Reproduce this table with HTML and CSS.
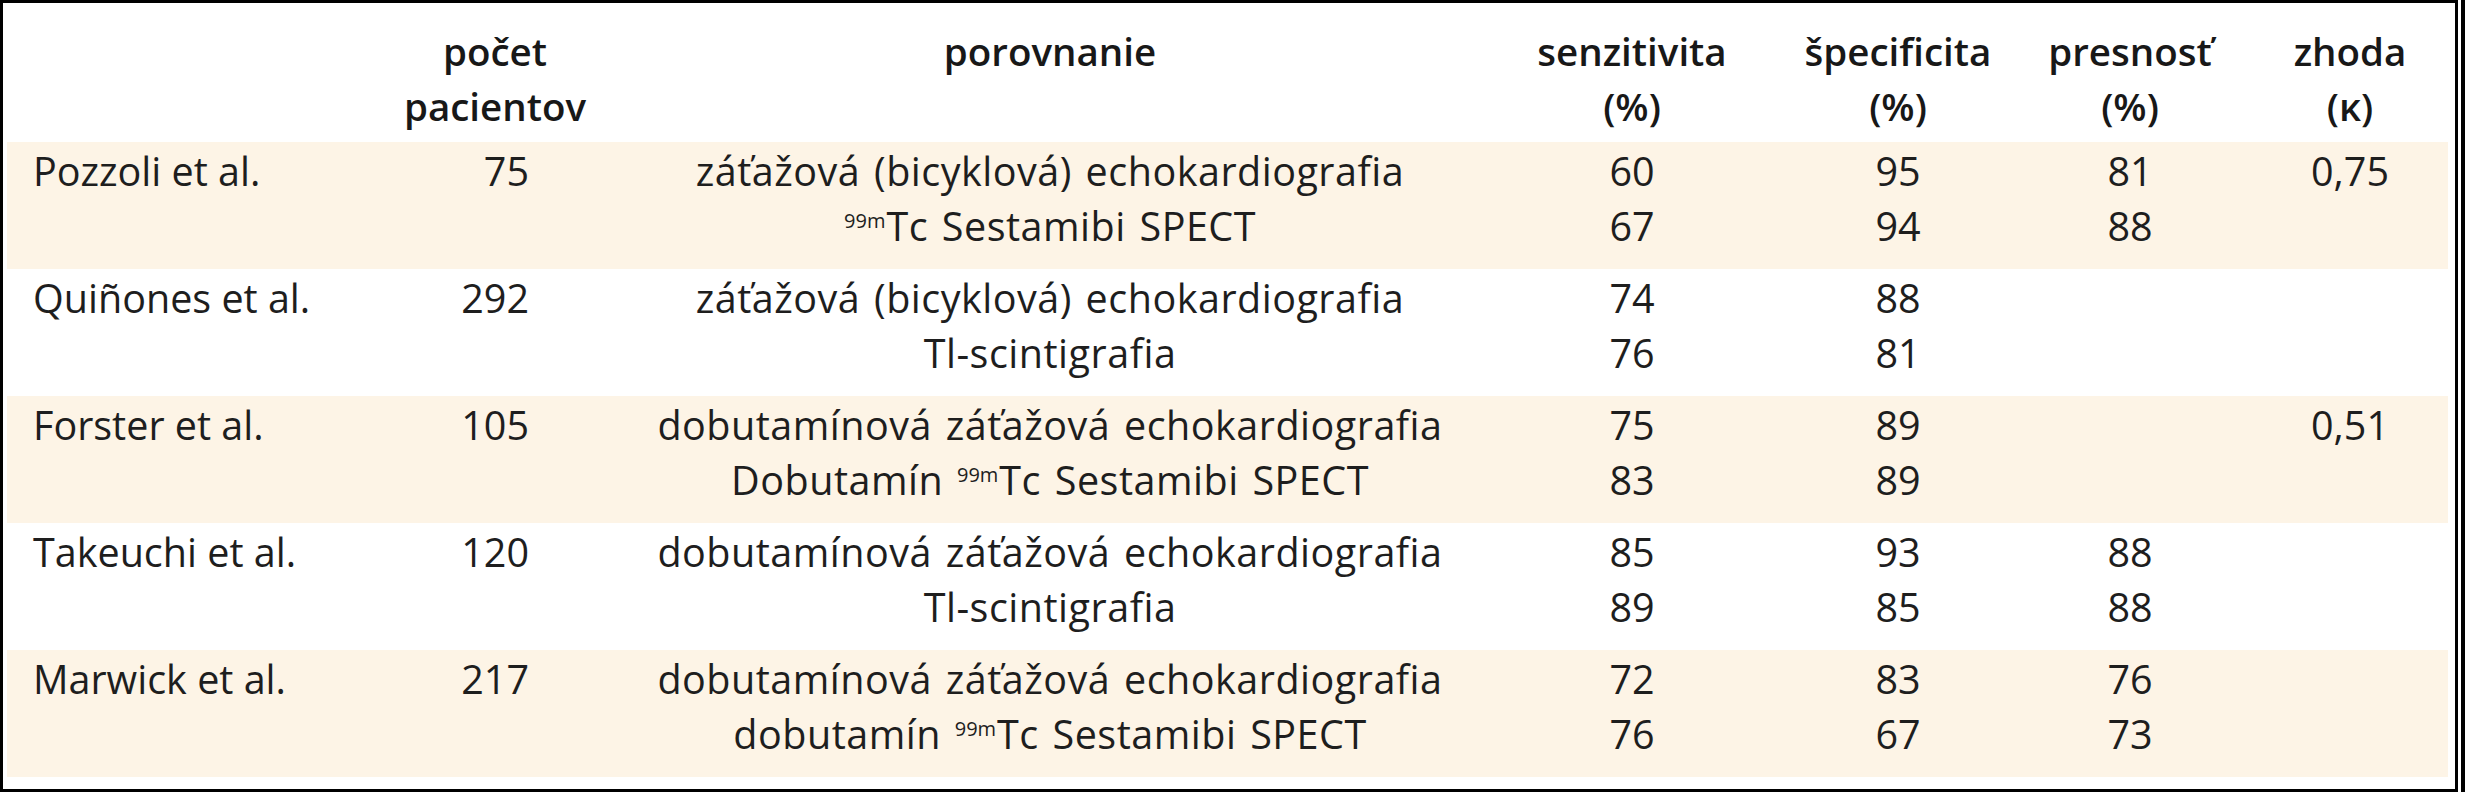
FILE: index.html
```html
<!DOCTYPE html>
<html lang="sk">
<head>
<meta charset="utf-8">
<title>Porovnanie</title>
<link rel="stylesheet" href="styles.css">
</head>
<body>
<div class="frame">
  <div class="row head">
    <div class="c c1"></div>
    <div class="c c2">počet<br>pacientov</div>
    <div class="c c3">porovnanie</div>
    <div class="c c4">senzitivita<br>(%)</div>
    <div class="c c5">špecificita<br>(%)</div>
    <div class="c c6">presnosť<br>(%)</div>
    <div class="c c7">zhoda<br>(κ)</div>
  </div>
  <div class="row band">
    <div class="c c1">Pozzoli et al.</div>
    <div class="c c2 n">75</div>
    <div class="c c3">záťažová (bicyklová) echokardiografia<br><sup>99m</sup>Tc Sestamibi SPECT</div>
    <div class="c c4">60<br>67</div>
    <div class="c c5">95<br>94</div>
    <div class="c c6">81<br>88</div>
    <div class="c c7">0,75</div>
  </div>
  <div class="row">
    <div class="c c1">Quiñones et al.</div>
    <div class="c c2 n">292</div>
    <div class="c c3">záťažová (bicyklová) echokardiografia<br>Tl-scintigrafia</div>
    <div class="c c4">74<br>76</div>
    <div class="c c5">88<br>81</div>
    <div class="c c6"></div>
    <div class="c c7"></div>
  </div>
  <div class="row band">
    <div class="c c1">Forster et al.</div>
    <div class="c c2 n">105</div>
    <div class="c c3">dobutamínová záťažová echokardiografia<br>Dobutamín <sup>99m</sup>Tc Sestamibi SPECT</div>
    <div class="c c4">75<br>83</div>
    <div class="c c5">89<br>89</div>
    <div class="c c6"></div>
    <div class="c c7">0,51</div>
  </div>
  <div class="row">
    <div class="c c1">Takeuchi et al.</div>
    <div class="c c2 n">120</div>
    <div class="c c3">dobutamínová záťažová echokardiografia<br>Tl-scintigrafia</div>
    <div class="c c4">85<br>89</div>
    <div class="c c5">93<br>85</div>
    <div class="c c6">88<br>88</div>
    <div class="c c7"></div>
  </div>
  <div class="row band">
    <div class="c c1">Marwick et al.</div>
    <div class="c c2 n">217</div>
    <div class="c c3">dobutamínová záťažová echokardiografia<br>dobutamín <sup>99m</sup>Tc Sestamibi SPECT</div>
    <div class="c c4">72<br>76</div>
    <div class="c c5">83<br>67</div>
    <div class="c c6">76<br>73</div>
    <div class="c c7"></div>
  </div>
</div>
</body>
</html>
```

FILE: styles.css
```css
html, body {
  margin: 0;
  padding: 0;
  background: #ffffff;
}

.frame {
  box-sizing: border-box;
  width: 2458px;
  height: 792px;
  border: 3px solid #000;
  padding: 0 7px 12px 4px;
  background: #fff;
  box-shadow: 3px 0 0 0 #fff, 7px 0 0 0 #000;
  font-family: "Open Sans", "Lato", sans-serif;
  font-size: 39.5px;
  line-height: 55px;
  color: #1e1e1e;
}

.row {
  display: grid;
  grid-template-columns: 373px 230px 880px 284px 248px 216px 210px;
  height: 127px;
  box-sizing: border-box;
  padding-top: 2px;
}

.row.head {
  height: 139px;
  padding-top: 21px;
  font-size: 38.5px;
  font-weight: 600;
  color: #181818;
}

.band {
  background: #fdf4e6;
}

.c {
  text-align: center;
  white-space: nowrap;
}

.c1 {
  text-align: left;
  padding-left: 26px;
}

.c2.n {
  text-align: right;
  padding-right: 81px;
}

.row:not(.head) .c3 {
  letter-spacing: 0.5px;
  word-spacing: 3px;
}

.c7 {
  padding-left: 14px;
}

sup {
  font-size: 20px;
  line-height: 0;
  vertical-align: 13px;
  margin-right: 1px;
  letter-spacing: 0;
}
```
